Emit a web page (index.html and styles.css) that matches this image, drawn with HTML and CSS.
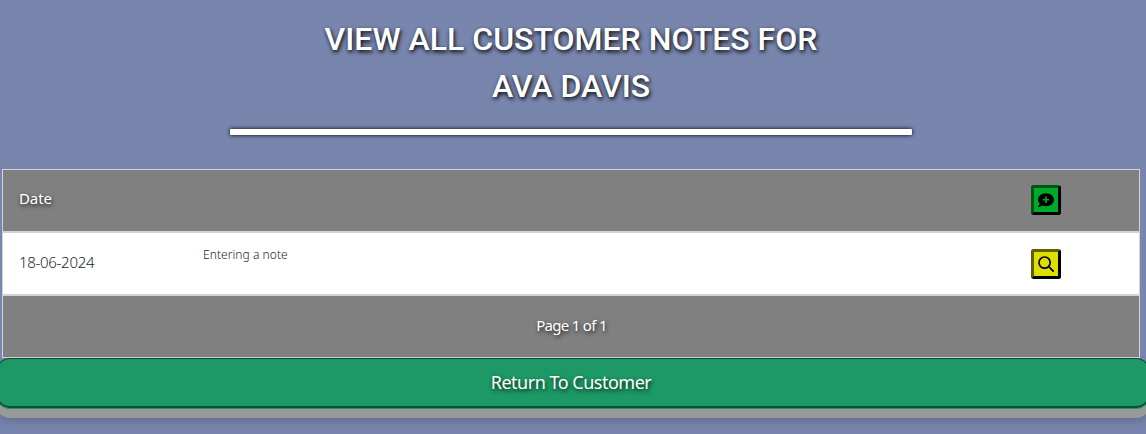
FILE: index.html
```html
<!DOCTYPE html>
<html lang="en">
<head>
<meta charset="utf-8">
<title>Customer Notes</title>
<link rel="stylesheet" href="styles.css">
</head>
<body>
<header class="heading">
  <h1 class="title">VIEW ALL CUSTOMER NOTES FOR<br>AVA DAVIS</h1>
  <div class="rule"></div>
</header>
<main class="notes">
  <div class="row row-dark">
    <span class="label"><span class="date-label">Date</span></span>
    <span class="note"></span>
    <button class="icon-btn add" aria-label="Add note">
      <svg width="16" height="16" viewBox="0 0 16 16"><path fill-rule="evenodd" d="M8 1.2c4.4 0 8 2.8 8 6.500s-3.600 6.500-8 6.500c-1.200 0-2.300-.2-3.300-.6C3.600 14.400 2 15 .4 15c-.4 0-.5-.4-.2-.7.7-.8 1.300-1.900 1.500-2.900C.6 10.300 0 9.100 0 7.700 0 4 3.600 1.200 8 1.200zM7.200 4.500v2.400H4.800v1.600h2.400v2.400h1.600V8.500h2.400V6.900H8.800V4.500z"/></svg>
    </button>
  </div>
  <div class="row row-light">
    <span class="label"><span class="date-value">18-06-2024</span></span>
    <span class="note"><span class="note-text">Entering a note</span></span>
    <button class="icon-btn view" aria-label="View note">
      <svg width="16" height="16" viewBox="0 0 16 16" fill="none" stroke="#000" stroke-width="1.700" stroke-linecap="round"><circle cx="6.600" cy="6.600" r="5.600"/><path d="M10.700 10.700L15.200 15.200"/></svg>
    </button>
  </div>
  <div class="row row-dark pager"><span class="page-text">Page 1 of 1</span></div>
</main>
<button class="return"><span class="return-text">Return To Customer</span></button>
</body>
</html>
```
FILE: styles.css
```css
* { box-sizing: border-box; }
body {
  margin: 0;
  height: 434px;
  overflow: hidden;
  background: #7885ad;
  font-family: "Noto Sans", "Open Sans", sans-serif;
}
.heading {
  width: 682px;
  margin-left: 230px;
  padding-top: 16px;
}
.title {
  margin: 0 0 19px;
  font: 500 32px/47px Roboto, sans-serif;
  color: #fff;
  text-align: center;
  text-shadow: 1px 2px 4px #000;
}
.rule {
  height: 6px;
  margin-bottom: 34px;
  background: #fff;
  border-radius: 1px;
  box-shadow: 0 0 4px #000;
}
.notes {
  width: 1138px;
  margin-left: 2px;
  border: 1px solid #d3d3d3;
}
.row {
  display: grid;
  grid-template-columns: 184px 1fr 108px;
  align-items: center;
  height: 63px;
  padding-left: 16px;
  border-bottom: 2px solid #d3d3d3;
}
.row-dark {
  background: #808080;
  color: #fff;
  text-shadow: 1px 2px 4px rgba(0, 0, 0, .8);
}
.row-dark .icon-btn { margin-bottom: 1px; }
.row-light { background: #fff; color: #212529; }
.label { padding-bottom: 4px; font-size: 15px; }
.row-dark .label { padding-bottom: 5px; }
.date-label { letter-spacing: -0.1px; }
.date-value { font-weight: 300; letter-spacing: -0.3px; }
.note { align-self: start; padding-top: 13px; font-size: 12px; line-height: 18px; }
.note-text { font-weight: 300; letter-spacing: 0.05px; }
.icon-btn {
  display: flex;
  align-items: center;
  justify-content: center;
  width: 30px;
  height: 30px;
  padding: 0;
  border: 3px solid #000;
  border-radius: 3px;
}
.add { background: #00a928; border-top-color: #005514; border-left-color: #005514; }
.view { background: #dede00; border-top-color: #606000; border-left-color: #606000; }
.pager {
  display: flex;
  justify-content: center;
  height: 61px;
  padding: 0 0 4px 1px;
  border: 0;
  font-size: 15px;
}
.page-text { letter-spacing: -0.7px; }
.return {
  display: flex;
  align-items: center;
  justify-content: center;
  width: 1154px;
  height: 51px;
  margin-left: -4px;
  padding: 0 4px 4px 0;
  border: 1px solid #0d4d33;
  border-bottom: 1px solid #1c9966;
  border-radius: 14px;
  background: #1c9966;
  box-shadow: inset 0 -2px #0d4d33, 0 9px #999, 0 10px 12px rgba(70, 75, 110, .6);
  color: #fff;
  font-family: inherit;
  font-size: 18px;
  text-shadow: 1px 2px 4px rgba(0, 0, 0, .8);
}
.return-text { letter-spacing: -0.5px; }
```
